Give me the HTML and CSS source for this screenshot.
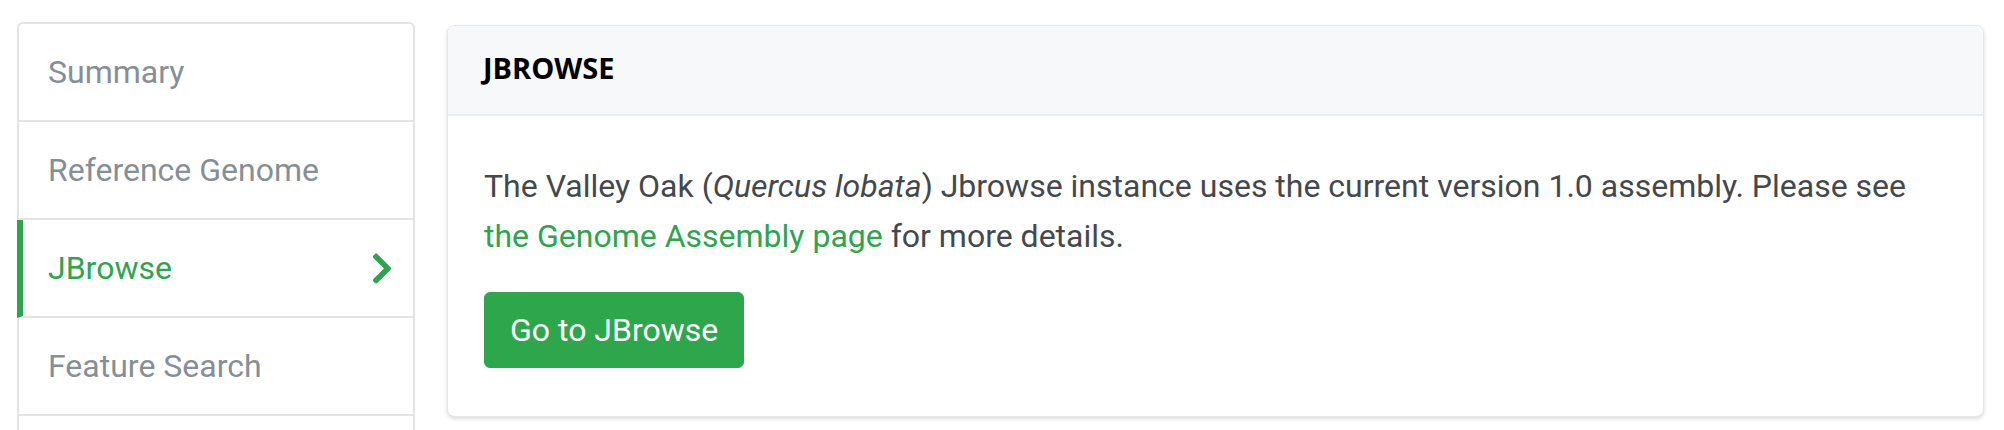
FILE: index.html
```html
<!DOCTYPE html>
<html lang="en">
<head>
<meta charset="utf-8">
<title>JBrowse</title>
<link rel="stylesheet" href="styles.css">
</head>
<body>
<div class="page">
  <nav class="sidebar">
    <a class="nav-item" href="#">Summary</a>
    <a class="nav-item" href="#">Reference Genome</a>
    <a class="nav-item active" href="#">JBrowse
      <svg class="chev" width="24" height="35" viewBox="0 0 320 512" aria-hidden="true"><path fill="currentColor" d="M285.476 272.971L91.132 467.314c-9.373 9.373-24.569 9.373-33.941 0l-22.667-22.667c-9.357-9.357-9.375-24.522-.04-33.901L188.505 256 34.484 101.255c-9.335-9.379-9.317-24.544.04-33.901l22.667-22.667c9.373-9.373 24.569-9.373 33.941 0L285.475 239.03c9.373 9.372 9.373 24.568.001 33.941z"/></svg>
    </a>
    <a class="nav-item" href="#">Feature Search</a>
    <span class="nav-item nav-rest"></span>
  </nav>
  <section class="card">
    <header class="card-header">JBROWSE</header>
    <div class="card-body">
      <p class="text">The Valley Oak (<em>Quercus lobata</em>) Jbrowse instance uses the current version 1.0 assembly. Please see <a class="link" href="#">the Genome Assembly page</a> for more details.</p>
      <a class="btn" href="#">Go to JBrowse</a>
    </div>
  </section>
</div>
</body>
</html>
```
FILE: styles.css
```css
html, body {
  margin: 0;
  padding: 0;
  background: #ffffff;
  overflow: hidden;
}
body {
  font-family: Roboto, "Liberation Sans", sans-serif;
  font-size: 32px;
  line-height: 48px;
  color: #44484c;
}
.page {
  display: flex;
  align-items: flex-start;
  gap: 32px;
  padding: 22px 20px 0 17px;
}
.sidebar {
  flex: 0 0 398px;
  box-sizing: border-box;
  display: flex;
  flex-direction: column;
  border: 2px solid #e4e4e4;
  border-radius: 6px 6px 0 0;
  background: #fff;
}
.nav-item {
  display: flex;
  align-items: center;
  justify-content: space-between;
  padding: 24px 30px 24px 29px;
  border-bottom: 2px solid #e4e4e4;
  color: #868e96;
  text-decoration: none;
  line-height: 48px;
}
.nav-rest {
  min-height: 48px;
}
.nav-item.active {
  color: #2ea44f;
  margin-left: -2px;
  border-left: 6px solid #2ea44f;
  padding-left: 25px;
  padding-right: 19px;
}
.chev {
  display: block;
  color: #2ea44f;
}
.card {
  flex: 1 1 auto;
  margin-top: 3px;
  border: 1px solid #e6e7e8;
  border-radius: 8px;
  background: #fff;
  box-shadow: 0 2px 4px rgba(0, 0, 0, 0.14);
  overflow: hidden;
}
.card-header {
  background: #f7f8fa;
  border-bottom: 2px solid #e9ecef;
  padding: 22px 30px 26px 35px;
  font-family: "Open Sans", "DejaVu Sans", sans-serif;
  font-weight: 700;
  font-size: 29px;
  line-height: 40px;
  color: #000;
}
.card-body {
  padding: 45px 30px 48px 36px;
}
.text {
  margin: 0 0 31px 0;
  line-height: 50px;
}
.text em {
  font-style: italic;
}
.link {
  color: #2ea44f;
  text-decoration: none;
}
.btn {
  display: inline-block;
  background: #2ea64b;
  border: 1px solid #2ea64b;
  color: #fff;
  text-decoration: none;
  border-radius: 6px;
  padding: 13px 25px;
  line-height: 48px;
}
```
